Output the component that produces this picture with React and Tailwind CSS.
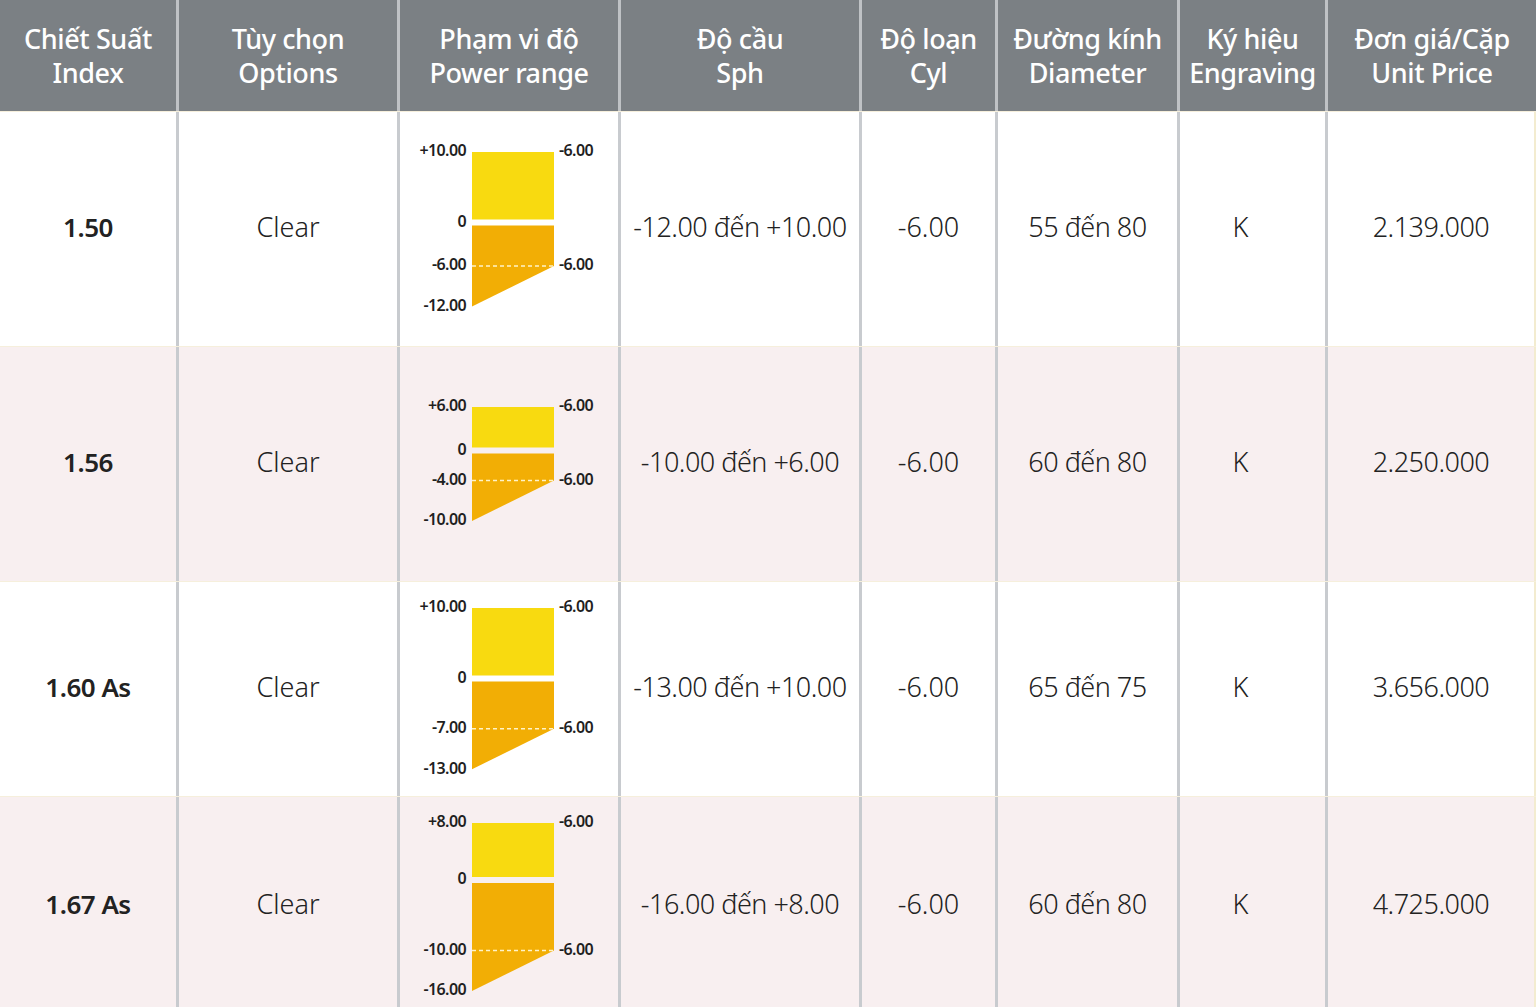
import React from 'react';

const headers = [
    ['Chiết Suất', 'Index'],
    ['Tùy chọn', 'Options'],
    ['Phạm vi độ', 'Power range'],
    ['Độ cầu', 'Sph'],
    ['Độ loạn', 'Cyl'],
    ['Đường kính', 'Diameter'],
    ['Ký hiệu', 'Engraving'],
    ['Đơn giá/Cặp', 'Unit Price'],
];

const rows = [
    { index: '1.50', plus: 10, minus: 12, sph: '-12.00 đến +10.00', dia: '55 đến 80', price: '2.139.000', h: 'h-[235px]', bg: 'bg-white' },
    { index: '1.56', plus: 6, minus: 10, sph: '-10.00 đến +6.00', dia: '60 đến 80', price: '2.250.000', h: 'h-[235px]', bg: 'bg-[#f8eff0]' },
    { index: '1.60 As', plus: 10, minus: 13, sph: '-13.00 đến +10.00', dia: '65 đến 75', price: '3.656.000', h: 'h-[215px]', bg: 'bg-white' },
    { index: '1.67 As', plus: 8, minus: 16, sph: '-16.00 đến +8.00', dia: '60 đến 80', price: '4.725.000', h: 'h-[220px]', bg: 'bg-[#f8eff0]' },
];

const fmt = (v) => v.toFixed(2);

// power range chart: yellow = plus side, orange = minus side, cyl -6.00 cut
const PowerChart = ({ plus, minus }) => {
    const k = 6.75;
    const pad = 14;
    const yellowH = plus * k;
    const top2 = pad + yellowH + 6;
    const brk = top2 + (minus - 6) * k;
    const tip = top2 + minus * k;
    const x1 = 72;
    const x2 = 154;
    const lbl = 'text-[16px] font-semibold fill-[#1f1f1f] tracking-[-0.6px]';
    return (
        <svg width="218" height={tip + pad} className="block overflow-visible font-['Noto_Sans','Liberation_Sans',sans-serif]">
            <rect x={x1} y={pad} width={x2 - x1} height={yellowH} fill="#f8da10" />
            <path d={`M${x1} ${top2} H${x2} V${brk} L${x1} ${tip} Z`} fill="#f2ae05" />
            <line x1={x1} y1={brk} x2={x2} y2={brk} stroke="#fff3c8" strokeWidth="1.3" strokeDasharray="4 3" />
            <text x="66" y={pad} textAnchor="end" dominantBaseline="middle" className={lbl}>+{fmt(plus)}</text>
            <text x="66" y={pad + yellowH + 3} textAnchor="end" dominantBaseline="middle" className={lbl}>0</text>
            <text x="66" y={brk} textAnchor="end" dominantBaseline="middle" className={lbl}>-{fmt(minus - 6)}</text>
            <text x="66" y={tip} textAnchor="end" dominantBaseline="middle" className={lbl}>-{fmt(minus)}</text>
            <text x="159" y={pad} dominantBaseline="middle" className={lbl}>-6.00</text>
            <text x="159" y={brk} dominantBaseline="middle" className={lbl}>-6.00</text>
        </svg>
    );
};

const cols = 'grid grid-cols-[176px_221px_221px_241px_136px_182px_148px_211px]';
const cell = 'flex items-center justify-center pb-1 border-l-[3px] border-[#c8cbcf] text-[27px] font-light';

const App = () => {
    return (
        <div className="w-[1536px] h-[1007px] overflow-hidden bg-white text-[#222] font-['Noto_Sans','Liberation_Sans',sans-serif]">
            {/* Header */}
            <div className={`${cols} h-[111px] bg-[#7b8084]`}>
                {headers.map(([vi, en], i) => (
                    <div
                        key={en}
                        className={`flex flex-col items-center justify-center text-white text-[27px] font-medium leading-[34px] tracking-[-0.4px] ${i > 0 ? 'border-l-[3px] border-[#bfc2c5]' : ''}`}
                    >
                        <span>{vi}</span>
                        <span>{en}</span>
                    </div>
                ))}
            </div>

            {/* Rows */}
            {rows.map((r) => (
                <div key={r.index} className={`${cols} ${r.h} ${r.bg} border-t border-[#f6efdc]`}>
                    <div className="flex items-center justify-center pb-1 text-[26px] font-semibold tracking-[-0.5px]">{r.index}</div>
                    <div className={cell}>Clear</div>
                    <div className="flex items-center justify-center border-l-[3px] border-[#c8cbcf]">
                        <PowerChart plus={r.plus} minus={r.minus} />
                    </div>
                    <div className={`${cell} tracking-[-0.5px]`}>{r.sph}</div>
                    <div className={cell}>-6.00</div>
                    <div className={`${cell} tracking-[-0.5px]`}>{r.dia}</div>
                    <div className={`${cell} pr-6`}>K</div>
                    <div className={`${cell} tracking-[-0.5px] border-r-2 border-r-[#f3ecd0]`}>{r.price}</div>
                </div>
            ))}
        </div>
    );
};

export default App;
